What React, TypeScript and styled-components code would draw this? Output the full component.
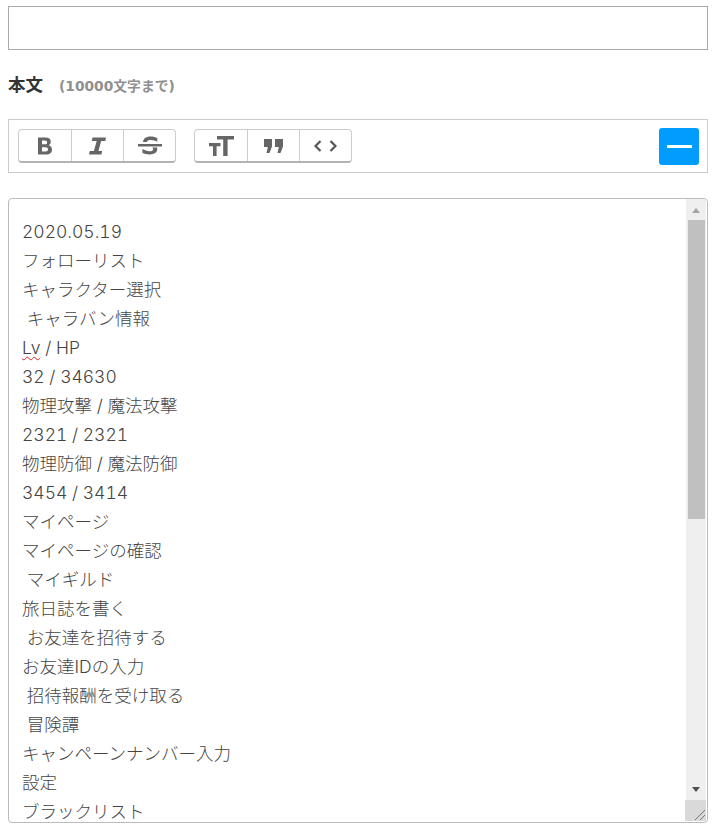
import React from "react";
import styled, { createGlobalStyle } from "styled-components";

const Global = createGlobalStyle`
  html, body { margin: 0; padding: 0; background: #fff; }
  body { font-family: "Inter", "Noto Sans CJK JP", sans-serif; color: #333; overflow: hidden; }
`;

const Page = styled.div`
  width: 723px;
  height: 836px;
  padding: 6px 15px 0 8px;
  box-sizing: border-box;
  display: flex;
  flex-direction: column;
`;

const TitleInput = styled.input`
  display: block;
  width: 100%;
  height: 44px;
  box-sizing: border-box;
  border: 1px solid #aaa;
  background: #fff;
  padding: 0;
  outline: none;
`;

const Label = styled.div`
  margin-top: 24px;
  height: 22px;
  display: flex;
  align-items: center;
  gap: 16px;
`;

const LabelMain = styled.span`
  font-family: "Noto Sans CJK JP", sans-serif;
  font-size: 17.5px;
  line-height: 20px;
  padding-bottom: 3px;
  font-weight: 700;
  color: #333;
`;

const LabelNote = styled.span`
  font-family: "DejaVu Sans", "Noto Sans CJK JP", sans-serif;
  font-size: 13.8px;
  line-height: 20px;
  padding-top: 2px;
  font-weight: 700;
  color: #909090;
`;

const Toolbar = styled.div`
  margin-top: 23px;
  height: 54px;
  box-sizing: border-box;
  border: 1px solid #ccc;
  padding: 0 8px 0 9px;
  display: flex;
  align-items: center;
  gap: 18px;
`;

const Group = styled.div`
  display: flex;
  height: 34px;
  box-sizing: border-box;
  border: 1px solid #ccc;
  border-bottom: 2px solid #b4b4b4;
  border-radius: 4px;
  background: #fff;
`;

const ToolButton = styled.button`
  width: 52px;
  padding: 0;
  border: 0;
  border-left: 1px solid #ccc;
  background: transparent;
  display: flex;
  align-items: center;
  justify-content: center;
  &:first-child { border-left: 0; }
`;

const Toggle = styled.button`
  margin-left: auto;
  width: 40px;
  height: 37px;
  border: 0;
  border-radius: 3px;
  background: #009dff;
  padding: 0;
  display: flex;
  align-items: center;
  justify-content: center;
`;

const Dash = styled.span`
  width: 25px;
  height: 3px;
  background: #fff;
`;

const EditorBox = styled.div`
  position: relative;
  margin-top: 25px;
  height: 625px;
  box-sizing: border-box;
  border: 1px solid #bbb;
  border-radius: 4px;
  overflow: hidden;
  background: #fff;
`;

const Body = styled.div`
  padding: 18px 30px 0 13px;
  font-family: "Inter", "Noto Sans CJK JP", sans-serif;
  font-size: 17.5px;
  font-weight: 300;
  font-variant-numeric: tabular-nums;
  line-height: 29px;
  color: #444;
  white-space: pre;
`;

const Line = styled.div`
  height: 29px;
`;

const Misspelt = styled.span`
  text-decoration: underline wavy #e02020 1px;
  text-underline-offset: 2px;
`;

const ScrollTrack = styled.div`
  position: absolute;
  top: 0;
  right: 1px;
  bottom: 1px;
  width: 20px;
  background: #efefef;
`;

const Arrow = styled.div<{ $down?: boolean }>`
  position: absolute;
  left: 6px;
  ${(p) => (p.$down ? "bottom: 29px;" : "top: 9px;")}
  width: 0;
  height: 0;
  border-left: 4.5px solid transparent;
  border-right: 4.5px solid transparent;
  ${(p) => (p.$down ? "border-top: 5px solid #505050;" : "border-bottom: 5px solid #a3a3a3;")}
`;

const Thumb = styled.div`
  position: absolute;
  top: 21px;
  left: 2px;
  width: 17px;
  height: 299px;
  background: #c0c0c0;
`;

const Corner = styled.div`
  position: absolute;
  right: 1px;
  bottom: 1px;
  width: 21px;
  height: 21px;
  background: #d9d9d9;
`;

const GripIcon = styled.svg`
  position: absolute;
  right: 1px;
  bottom: 1px;
`;

const Ic = styled.svg`
  display: block;
  fill: #666;
`;

const lines: React.ReactNode[] = [
  "2020.05.19",
  "フォローリスト",
  "キャラクター選択",
  " キャラバン情報",
  <><Misspelt>Lv</Misspelt> / HP</>,
  "32 / 34630",
  "物理攻撃 / 魔法攻撃",
  "2321 / 2321",
  "物理防御 / 魔法防御",
  "3454 / 3414",
  "マイページ",
  "マイページの確認",
  " マイギルド",
  "旅日誌を書く",
  " お友達を招待する",
  "お友達IDの入力",
  " 招待報酬を受け取る",
  " 冒険譚",
  "キャンペーンナンバー入力",
  "設定",
  "ブラックリスト",
];

const Bold = () => (
  <Ic width="14" height="18" viewBox="0 0 14 18">
    <path fillRule="evenodd" d="M0 .5h7.500c3.400 0 5.300 1.600 5.300 4.200 0 1.700-.9 2.900-2.300 3.500C12.500 8.700 14 10.200 14 12.500c0 3.200-2.300 5-5.800 5H0V.5zm4 3v3.800h3c1.400 0 2.100-.7 2.100-1.900S8.400 3.500 7 3.500H4zm0 6.700v4.300h3.600c1.500 0 2.400-.8 2.400-2.200s-.9-2.100-2.400-2.100H4z" />
  </Ic>
);
const Italic = () => (
  <Ic width="17" height="18" viewBox="0 0 17 18">
    <path d="M3.500.5H17l-.7 3.400h-4.100L9.400 14.100h3.700l-.7 3.400H0l.7-3.400h4.200L7.700 3.900H2.800z" />
  </Ic>
);
const Strike = () => (
  <Ic width="24" height="19" viewBox="0 0 24 19">
    <path d="M0 8h24v2.500H0z" />
    <path d="M5 7C4.800 2.600 8 .5 12.300.5c3 0 5.400.6 7 1.500v3.700c-2-1.100-4.400-1.800-6.600-1.800-2.300 0-3.600.7-3.600 1.700 0 .2 0 .3.100.4H5zM19 11.500c.2.500.3 1 .3 1.600 0 3.500-3 5.400-7.400 5.400-3 0-5.800-.7-7.500-1.700v-3.700c2 1.200 4.800 2.100 7.200 2.100 2.300 0 3.500-.7 3.500-1.800 0-.7-.3-1.300-.8-1.900H19z" />
  </Ic>
);
const TextSize = () => (
  <Ic width="25" height="20" viewBox="0 0 25 20">
    <path d="M8 0h17v3.400h-6.400V20h-4.400V3.400H8z" />
    <path d="M0 7h11.500v3.200H7.600V20H4v-9.800H0z" />
  </Ic>
);
const Quote = () => (
  <Ic width="19" height="14" viewBox="0 0 19 14">
    <path d="M0 0h8v7.500L5.500 14H2.500L3.800 8H0zM11 0h8v7.500L16.500 14h-3L14.800 8H11z" />
  </Ic>
);
const Code = () => (
  <svg width="23" height="12" viewBox="0 0 23 12" fill="none" stroke="#555" strokeWidth="2.200">
    <path d="M6.500 1 1.500 6l5 5M16.500 1l5 5-5 5" />
  </svg>
);

export default function App() {
  return (
    <Page>
      <Global />
      <TitleInput aria-label="タイトル" />
      <Label>
        <LabelMain>本文</LabelMain>
        <LabelNote>(10000文字まで)</LabelNote>
      </Label>
      <Toolbar>
        <Group>
          <ToolButton><Bold /></ToolButton>
          <ToolButton><Italic /></ToolButton>
          <ToolButton><Strike /></ToolButton>
        </Group>
        <Group>
          <ToolButton><TextSize /></ToolButton>
          <ToolButton><Quote /></ToolButton>
          <ToolButton><Code /></ToolButton>
        </Group>
        <Toggle aria-label="折りたたむ"><Dash /></Toggle>
      </Toolbar>
      <EditorBox>
        <Body>
          {lines.map((l, i) => (
            <Line key={i}>{l}</Line>
          ))}
        </Body>
        <ScrollTrack>
          <Arrow />
          <Thumb />
          <Arrow $down />
        </ScrollTrack>
        <Corner />
        <GripIcon width="12" height="12" viewBox="0 0 12 12" fill="none" stroke="#777" strokeWidth="1">
          <path d="M1 11 11 1M6 11l5-5" />
        </GripIcon>
      </EditorBox>
    </Page>
  );
}
